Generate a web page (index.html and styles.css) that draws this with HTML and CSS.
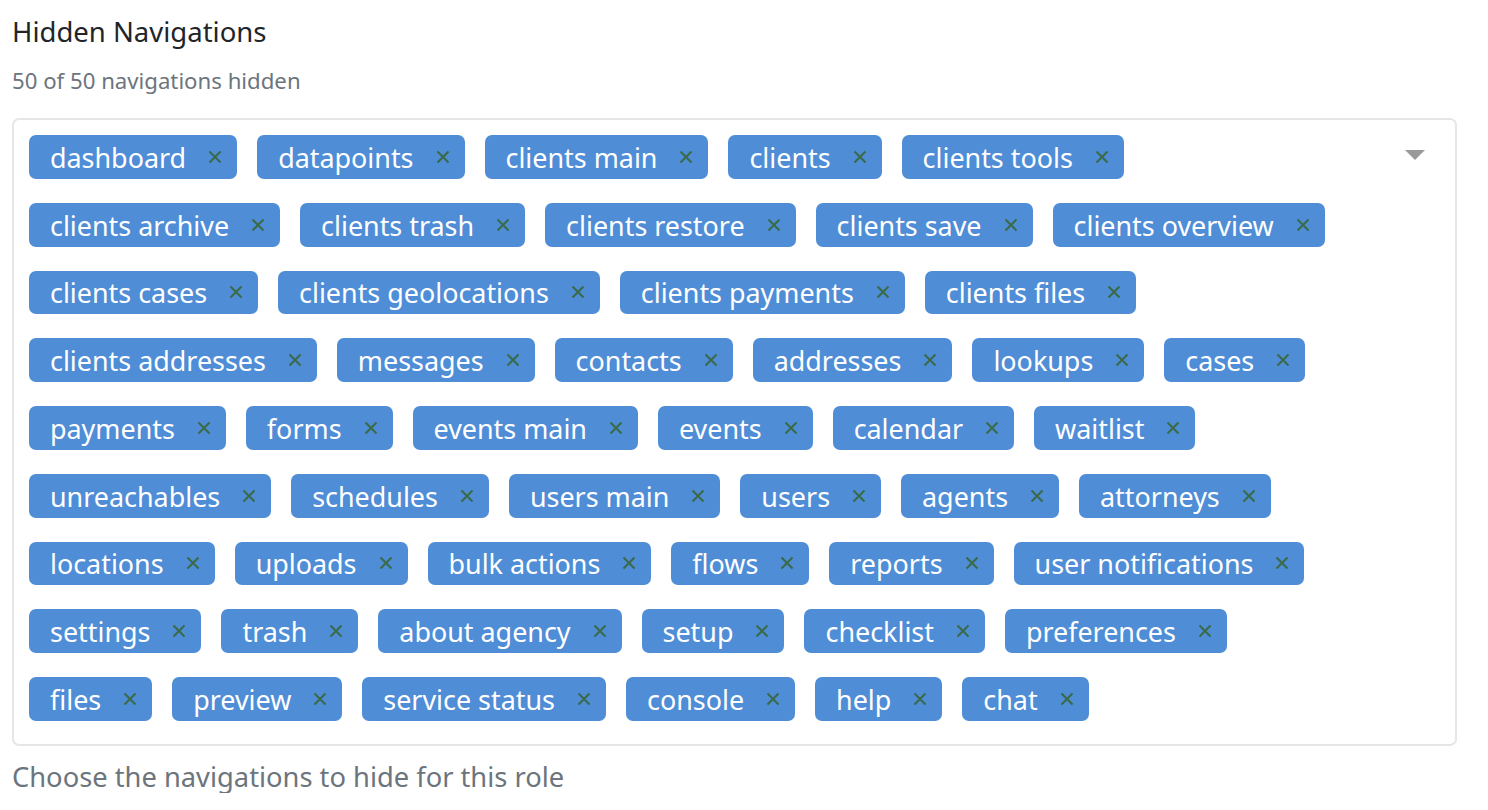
FILE: index.html
```html
<!DOCTYPE html>
<html>
<head>
<meta charset="utf-8">
<link rel="stylesheet" href="styles.css">
</head>
<body>
<div class="field">
  <h2 class="title">Hidden Navigations</h2>
  <div class="count">50 of 50 navigations hidden</div>
  <div class="select">
    <div class="tags" id="tags"></div>
    <div class="caret"></div>
  </div>
  <div class="help">Choose the navigations to hide for this role</div>
</div>
<script>
const rows = [
 ["dashboard","datapoints","clients main","clients","clients tools"],
 ["clients archive","clients trash","clients restore","clients save","clients overview"],
 ["clients cases","clients geolocations","clients payments","clients files"],
 ["clients addresses","messages","contacts","addresses","lookups","cases"],
 ["payments","forms","events main","events","calendar","waitlist"],
 ["unreachables","schedules","users main","users","agents","attorneys"],
 ["locations","uploads","bulk actions","flows","reports","user notifications"],
 ["settings","trash","about agency","setup","checklist","preferences"],
 ["files","preview","service status","console","help","chat"]
];
const x = '<svg class="x" viewBox="0 0 14 14" width="14" height="14"><path d="M1.5 1.5L12.5 12.5M12.5 1.5L1.5 12.5" stroke="currentColor" stroke-width="2" fill="none"/></svg>';
const host = document.getElementById('tags');
rows.forEach(r => {
  const row = document.createElement('div');
  row.className = 'tag-row';
  r.forEach(t => {
    const s = document.createElement('span');
    s.className = 'tag';
    s.innerHTML = '<span class="label">' + t + '</span>' + x;
    row.appendChild(s);
  });
  host.appendChild(row);
});
</script>
</body>
</html>
```

FILE: styles.css
```css
html, body {
  margin: 0;
  padding: 0;
  background: #ffffff;
}
body {
  font-family: "Noto Sans", "Open Sans", sans-serif;
  color: #212529;
}
.field {
  padding: 16px 31px 0 12px;
}
.title {
  margin: 0;
  font-size: 27.5px;
  font-weight: 400;
  line-height: 32px;
}
.count {
  margin-top: 20px;
  font-size: 22.2px;
  line-height: 26px;
  color: #6c757d;
}
.select {
  margin-top: 24px;
  border: 2px solid #e6e6e6;
  border-radius: 7px;
  display: flex;
  padding: 15px 30px 23px 15px;
}
.tags {
  flex: 1;
  display: flex;
  flex-direction: column;
  gap: 24px;
}
.tag-row {
  display: flex;
  gap: 20px;
}
.tag {
  display: flex;
  align-items: center;
  height: 43.75px;
  padding: 0 15px 0 21px;
  background: #4f8dd7;
  border-radius: 7px;
  color: #ffffff;
  font-size: 26.9px;
}
.label {
  line-height: 43px;
  padding-top: 1px;
}
.x {
  margin-left: 22px;
  color: #3a6a47;
}
.caret {
  width: 0;
  height: 0;
  margin-top: 15px;
  border-left: 10px solid transparent;
  border-right: 10px solid transparent;
  border-top: 10px solid #999999;
}
.help {
  margin-top: 15px;
  font-size: 27.3px;
  line-height: 32px;
  color: #6c757d;
}
```
